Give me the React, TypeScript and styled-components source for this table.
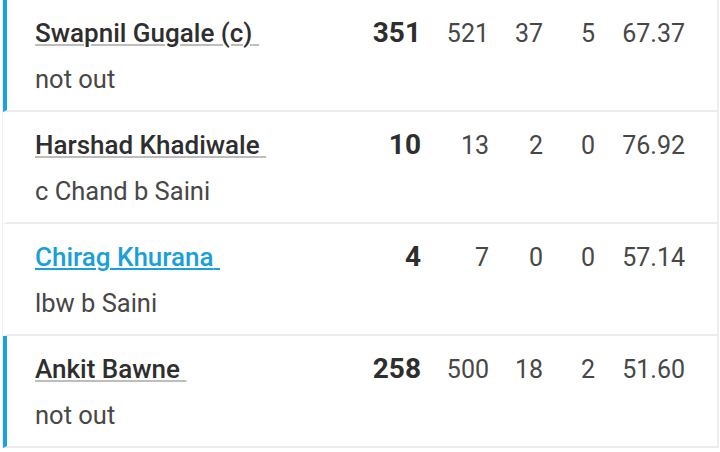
import React from "react";
import styled, { createGlobalStyle } from "styled-components";

type Batter = {
    name: string;
    dismissal: string;
    runs: number;
    balls: number;
    fours: number;
    sixes: number;
    strikeRate: string;
    notOut?: boolean;
    link?: boolean;
};

const BATTERS: Batter[] = [
    { name: "Swapnil Gugale (c)", dismissal: "not out", runs: 351, balls: 521, fours: 37, sixes: 5, strikeRate: "67.37", notOut: true },
    { name: "Harshad Khadiwale", dismissal: "c Chand b Saini", runs: 10, balls: 13, fours: 2, sixes: 0, strikeRate: "76.92" },
    { name: "Chirag Khurana", dismissal: "lbw b Saini", runs: 4, balls: 7, fours: 0, sixes: 0, strikeRate: "57.14", link: true },
    { name: "Ankit Bawne", dismissal: "not out", runs: 258, balls: 500, fours: 18, sixes: 2, strikeRate: "51.60", notOut: true },
];

export default function App() {
    return (
        <>
            <GlobalStyle />
            <List>
                {BATTERS.map((b) => (
                    <Row key={b.name} $active={!!b.notOut}>
                        <NameCell>
                            <PlayerName $link={!!b.link}>{b.name}{"\u00a0"}</PlayerName>
                        </NameCell>
                        <Runs>{b.runs}</Runs>
                        <Stat>{b.balls}</Stat>
                        <Stat>{b.fours}</Stat>
                        <Stat>{b.sixes}</Stat>
                        <Stat>{b.strikeRate}</Stat>
                        <Dismissal>{b.dismissal}</Dismissal>
                    </Row>
                ))}
            </List>
        </>
    );
}

const GlobalStyle = createGlobalStyle`
    body {
        margin: 0;
        background: #ffffff;
        font-family: Roboto, "Noto Sans", sans-serif;
    }
`;

const List = styled.div`
    margin: 0 1px 0 2px;
    border-left: 1px solid #efefef;
    border-right: 2px solid #ececec;
    background: #ffffff;
`;

const Row = styled.div<{ $active: boolean }>`
    display: grid;
    grid-template-columns: 1fr 80px 68px 54px 52px 90px;
    grid-template-rows: 30px 30px;
    align-items: baseline;
    row-gap: 16px;
    padding: 18px 32px 16px 28px;
    border-left: 4px solid ${(p) => (p.$active ? "#17a2e6" : "transparent")};
    border-bottom: 2px solid #ececec;
    line-height: 30px;
`;

const NameCell = styled.div`
    min-width: 0;
`;

const PlayerName = styled.span<{ $link: boolean }>`
    font-size: 26px;
    font-weight: 500;
    color: ${(p) => (p.$link ? "#1a9fdc" : "#2e2e2e")};
    text-decoration: underline;
    text-decoration-color: ${(p) => (p.$link ? "#1a9fdc" : "#bdbdbd")};
    text-decoration-thickness: 1.5px;
    text-underline-offset: 2px;
`;

const Runs = styled.div`
    text-align: right;
    font-size: 28px;
    font-weight: 700;
    color: #2e2e2e;
`;

const Stat = styled.div`
    text-align: right;
    font-size: 25px;
    color: #474747;
`;

const Dismissal = styled.div`
    grid-column: 1 / -1;
    font-size: 25.5px;
    color: #474747;
`;
